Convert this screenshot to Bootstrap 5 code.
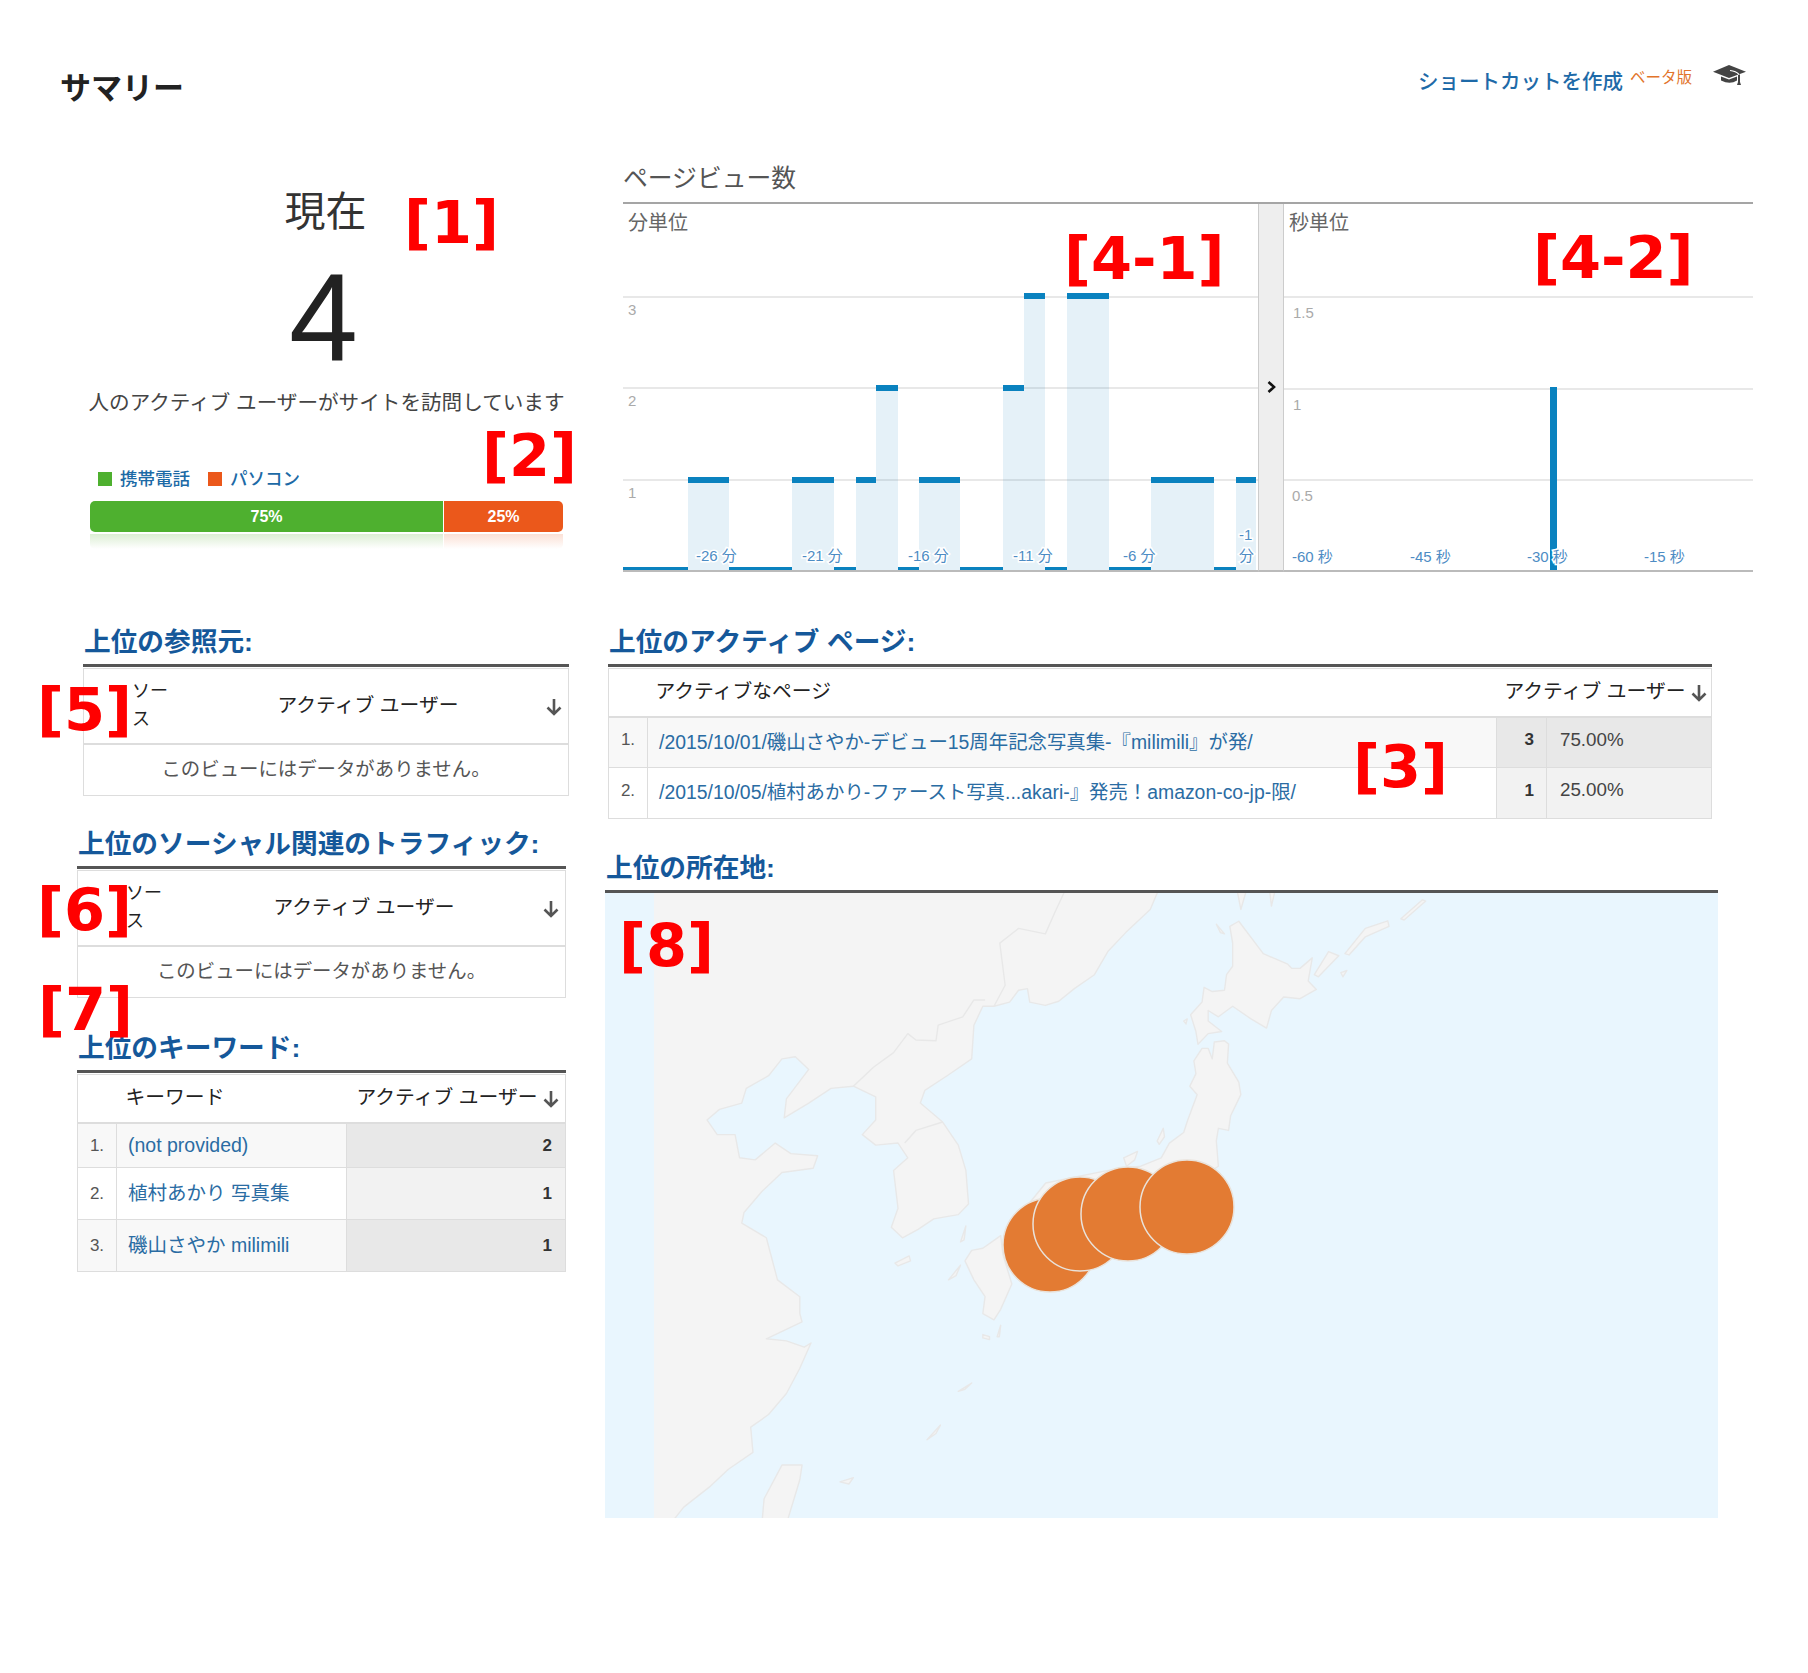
<!DOCTYPE html>
<html lang="ja">
<head>
    <meta charset="UTF-8">
    <meta name="viewport" content="width=device-width, initial-scale=1.0">
    <title>サマリー</title>
    <link href="https://cdn.jsdelivr.net/npm/bootstrap@5.3.0/dist/css/bootstrap.min.css" rel="stylesheet">
    <style>
        body {
            background: #fff;
            font-family: "Liberation Sans", "Noto Sans CJK JP", sans-serif;
            color: #333;
        }
        .page-wrap { width: 1808px; height: 1673px; position: relative; overflow: hidden; }

        /* header */
        .sum-head { height: 60px; margin: 56px 61px 44px 60px; }
        .sum-title { font-size: 31px; font-weight: 700; color: #222; margin: 5px 0 0; line-height: 60px; }
        .short-link { font-size: 20.5px; font-weight: 500; color: #1e6aa8; text-decoration: none; margin-bottom: 8px; }
        .beta-tag { font-size: 15.5px; color: #e2742b; margin: 0 20px 16px 7px; }
        .cap-icon { width: 33px; height: 21px; margin: 0 1px 22px 1px; fill: #444; }

        /* realtime */
        .top-row { height: 464px; }
        .now-box { width: 477px; margin-left: 88px; flex-shrink: 0; }
        .now-label { font-size: 41px; line-height: 48px; padding: 28px 2px 0 0; color: #333; }
        .now-count { font-size: 124px; line-height: 106px; padding: 28px 6px 0 0; color: #222; }
        .now-text { font-size: 20.6px; line-height: 30px; margin-top: 18px; color: #444; white-space: nowrap; }
        .device-legend { margin: 46px 0 0 10px; height: 30px; font-size: 17.5px; font-weight: 500; color: #1c6aa6; }
        .swatch { width: 14px; height: 14px; }
        .sw-green { background: #4eb02f; }
        .sw-orange { background: #eb581b; }
        .legend-gap { margin-right: 18px; }
        .device-bar { height: 31px; margin: 7px 0 0 2px; width: 473px; border-radius: 5px; background: #fff; --bs-progress-font-size: 16px; }
        .device-bar .progress-bar { font-weight: 700; color: #fff; }
        .bar-green { background: #4eb02f; width: 354px; border-right: 1px solid #fff; }
        .bar-orange { background: #eb581b; width: 119px; }
        .bar-shine { height: 15px; margin: 2px 0 0 2px; width: 473px; border-radius: 0 0 5px 5px; overflow: hidden; }
        .shine-g { width: 354px; background: linear-gradient(#dceed4, #fff); border-right: 1px solid #fff; }
        .shine-o { width: 119px; background: linear-gradient(#fbe0d5, #fff); }

        /* page view charts */
        .pv-box { width: 1130px; margin-left: 58px; flex-shrink: 0; }
        .pv-title { font-size: 24.8px; line-height: 34px; color: #555; padding: 2px 0 6px; border-bottom: 2px solid #a5a5a5; }
        .pv-charts { height: 368px; }
        .chart-svg { display: block; flex-shrink: 0; }
        .chart-min { width: 635px; height: 368px; }
        .chart-sec { width: 469px; height: 368px; }
        .chart-handle { width: 26px; flex-shrink: 0; background: #eee; border-left: 1px solid #ccc; border-right: 1px solid #ccc; border-bottom: 2px solid #bbb; }
        .chart-handle svg { width: 9px; height: 12px; }
        .c-head { font-size: 20px; fill: #666; }
        .c-y { font-size: 15px; fill: #aaa; }
        .c-x { font-size: 15px; fill: #4d8cc4; stroke: #fff; stroke-width: 3px; paint-order: stroke; }

        /* tables */
        .left-col { width: 604px; flex-shrink: 0; }
        .block-a { margin-left: 83px; width: 486px; }
        .block-b { margin: 30px 0 0 77px; width: 489px; }
        .block-c { margin: 32px 0 0 77px; width: 489px; }
        .block-d { margin-left: 4px; width: 1104px; }
        .block-e { margin: 31px 0 0 1px; width: 1113px; }
        .sec-head {
            font-size: 26.7px; line-height: 36px; font-weight: 700; color: #15589a;
            margin: 0; padding: 0 0 4px 1px; border-bottom: 3px solid #555; white-space: nowrap;
        }
        .ga-tbl { margin: 1px 0 0; table-layout: fixed; border: 1px solid #ddd; font-size: 19.8px; color: #333; }
        .ga-tbl th { font-weight: 400; color: #222; border: 0; border-bottom: 2px solid #ddd; padding: 0 0 2px 8px; vertical-align: middle; line-height: 28px; }
        .ga-tbl th.arrow-cell { padding-right: 6px; }
        .ga-tbl td { border: 1px solid #ddd; padding: 0; vertical-align: middle; }
        .ga-tbl a { color: #2a6ca3; text-decoration: none; }
        .ga-tbl td.c-alt { background: #f8f8f8; }
        .ga-tbl td.v-dark { background: #e8e8e8; }
        .ga-tbl td.v-light { background: #f2f2f2; }
        .down-arrow { width: 16px; height: 18px; fill: none; stroke: #555; stroke-width: 2.6; }
        .src-head { height: 75px; }
        .src-head th:first-child { width: 196px; padding-left: 48px; font-size: 18px; }
        .block-a .src-head th:first-child { width: 194px; }
        .src-name { display: block; width: 38px; }
        .src-head .aud { padding-left: 0; white-space: nowrap; }
        .src-empty td { height: 52px; text-align: center; color: #555; font-size: 19.4px; }
        .kw-head { height: 48px; }
        .kw-num { width: 39px; text-align: center; font-size: 17px; color: #555; }
        .kw-name { width: 230px; padding-left: 9px !important; }
        td.kw-name { padding-left: 11px !important; font-size: 19.5px; }
        .kw-r1 { height: 45px; }
        .kw-r2 { height: 52px; }
        .kw-val { text-align: right; padding-right: 13px !important; font-size: 17px; font-weight: 700; }
        .pg-head { height: 48px; }
        .col-num { width: 39px; }
        .col-val { width: 50px; }
        .col-pct { width: 165px; }
        .pg-num { text-align: center; font-size: 17px; color: #555; padding-bottom: 5px !important; }
        .pg-link { padding-left: 11px !important; font-size: 19.4px; white-space: nowrap; }
        .pg-row { height: 51px; }
        .pg-val { text-align: right; padding-right: 12px !important; font-weight: 700; font-size: 17px; padding-bottom: 5px !important; }
        .pg-pct { padding-left: 13px !important; font-size: 18.8px; color: #444; padding-bottom: 5px !important; }
        .pg-aud { white-space: nowrap; }

        /* map */
        .geo-map { display: block; width: 1113px; height: 625px; background: #e9f6fe; }
        .geo-land { fill: #f4f4f4; stroke: #e8e8e8; stroke-width: 1.4; stroke-linejoin: round; }
        .geo-line { fill: none; stroke: #e8e8e8; stroke-width: 1.4; stroke-linejoin: round; }
        .geo-land, .geo-line { vector-effect: non-scaling-stroke; }
        .geo-sea { fill: #e9f6fe; }
        .geo-dot { fill: #e37b33; stroke: #e9e2da; stroke-width: 1.5; }

        /* red callouts */
        .callout { position: absolute; font-family: "DejaVu Sans", sans-serif; font-weight: 700; font-size: 59px; line-height: 1; color: #f00; white-space: nowrap; }
        .co-1 { left: 404px; top: 193px; }
        .co-2 { left: 482px; top: 426px; }
        .co-41 { left: 1064px; top: 229px; }
        .co-42 { left: 1533px; top: 228px; }
        .co-3 { left: 1353px; top: 737px; }
        .co-5 { left: 37px; top: 680px; }
        .co-6 { left: 37px; top: 880px; }
        .co-7 { left: 38px; top: 980px; }
        .co-8 { left: 619px; top: 916px; }
    </style>
</head>
<body>
<div class="page-wrap">
    <div class="sum-head d-flex align-items-center">
        <h1 class="sum-title me-auto">サマリー</h1>
        <a class="short-link" href="#">ショートカットを作成</a>
        <span class="beta-tag">ベータ版</span>
        <svg class="cap-icon" viewBox="0 0 33 21">
            <path d="M0 6.700 16 0 33 6.700 16 13Z"/>
            <path d="M8 11.500 16 14.500 24 11.500V15.500Q17 20 8 15.500Z"/>
            <path d="M25 9.500H27V17L28 20H24L25 17Z"/>
            <path d="M17 5.500Q23 6 26 9.500" fill="none" stroke="#fff" stroke-width="1.200"/>
        </svg>
    </div>

    <div class="top-row d-flex">
        <div class="now-box">
            <div class="now-label text-center">現在</div>
            <div class="now-count text-center">4</div>
            <div class="now-text text-center">人のアクティブ ユーザーがサイトを訪問しています</div>
            <div class="device-legend d-flex align-items-center">
                <span class="swatch sw-green"></span><span class="ms-2 legend-gap">携帯電話</span>
                <span class="swatch sw-orange"></span><span class="ms-2">パソコン</span>
            </div>
            <div class="progress device-bar">
                <div class="progress-bar bar-green">75%</div>
                <div class="progress-bar bar-orange">25%</div>
            </div>
            <div class="bar-shine d-flex">
                <div class="shine-g"></div>
                <div class="shine-o"></div>
            </div>
        </div>

        <div class="pv-box">
            <div class="pv-title">ページビュー数</div>
            <div class="pv-charts d-flex">
                <svg class="chart-svg chart-min" id="chartMin" viewBox="0 0 635 368"></svg>
                <div class="chart-handle d-flex align-items-center justify-content-center">
                    <svg viewBox="0 0 9 12"><path d="M1.500 1 7 6 1.500 11" fill="none" stroke="#111" stroke-width="2.600"/></svg>
                </div>
                <svg class="chart-svg chart-sec" id="chartSec" viewBox="0 0 469 368"></svg>
            </div>
        </div>
    </div>

    <div class="d-flex">
        <div class="left-col">
            <div class="block-a">
                <h2 class="sec-head">上位の参照元:</h2>
                <table class="table ga-tbl">
                    <thead><tr class="src-head"><th><span class="src-name">ソース</span></th><th class="aud">アクティブ ユーザー</th><th class="text-end arrow-cell"><svg class="down-arrow" viewBox="0 0 16 18"><path d="M8 1V16M1.500 9.500 8 16 14.500 9.500"/></svg></th></tr></thead>
                    <tbody><tr class="src-empty"><td colspan="3">このビューにはデータがありません。</td></tr></tbody>
                </table>
            </div>
            <div class="block-b">
                <h2 class="sec-head">上位のソーシャル関連のトラフィック:</h2>
                <table class="table ga-tbl">
                    <thead><tr class="src-head"><th><span class="src-name">ソース</span></th><th class="aud">アクティブ ユーザー</th><th class="text-end arrow-cell"><svg class="down-arrow" viewBox="0 0 16 18"><path d="M8 1V16M1.500 9.500 8 16 14.500 9.500"/></svg></th></tr></thead>
                    <tbody><tr class="src-empty"><td colspan="3">このビューにはデータがありません。</td></tr></tbody>
                </table>
            </div>
            <div class="block-c">
                <h2 class="sec-head">上位のキーワード:</h2>
                <table class="table ga-tbl">
                    <thead>
                        <tr class="kw-head">
                            <th class="kw-num"></th>
                            <th class="kw-name">キーワード</th>
                            <th class="text-end arrow-cell text-nowrap">アクティブ ユーザー <svg class="down-arrow" viewBox="0 0 16 18"><path d="M8 1V16M1.500 9.500 8 16 14.500 9.500"/></svg></th>
                        </tr>
                    </thead>
                    <tbody>
                        <tr class="kw-r1"><td class="kw-num c-alt">1.</td><td class="kw-name c-alt"><a href="#">(not provided)</a></td><td class="kw-val v-dark">2</td></tr>
                        <tr class="kw-r2"><td class="kw-num">2.</td><td class="kw-name"><a href="#">植村あかり 写真集</a></td><td class="kw-val v-light">1</td></tr>
                        <tr class="kw-r2"><td class="kw-num c-alt">3.</td><td class="kw-name c-alt"><a href="#">磯山さやか milimili</a></td><td class="kw-val v-dark">1</td></tr>
                    </tbody>
                </table>
            </div>
        </div>

        <div>
            <div class="block-d">
                <h2 class="sec-head">上位のアクティブ ページ:</h2>
                <table class="table ga-tbl">
                    <colgroup><col class="col-num"><col><col class="col-val"><col class="col-pct"></colgroup>
                    <thead>
                        <tr class="pg-head">
                            <th></th>
                            <th>アクティブなページ</th>
                            <th class="pg-aud text-end arrow-cell" colspan="2">アクティブ ユーザー <svg class="down-arrow" viewBox="0 0 16 18"><path d="M8 1V16M1.500 9.500 8 16 14.500 9.500"/></svg></th>
                        </tr>
                    </thead>
                    <tbody>
                        <tr class="pg-row"><td class="pg-num c-alt">1.</td><td class="pg-link c-alt"><a href="#">/2015/10/01/磯山さやか-デビュー15周年記念写真集-『milimili』が発/</a></td><td class="pg-val v-dark">3</td><td class="pg-pct v-dark">75.00%</td></tr>
                        <tr class="pg-row"><td class="pg-num">2.</td><td class="pg-link"><a href="#">/2015/10/05/植村あかり-ファースト写真...akari-』発売！amazon-co-jp-限/</a></td><td class="pg-val v-light">1</td><td class="pg-pct v-light">25.00%</td></tr>
                    </tbody>
                </table>
            </div>
            <div class="block-e">
                <h2 class="sec-head">上位の所在地:</h2>
                <svg class="geo-map" viewBox="0 1 1113 625">
                    <!-- coordinates traced from the crop, scaled into map space -->
                    <g transform="translate(-15,-12) scale(.4464,.4209)">
                        <polygon class="geo-land" points="100,20 1275,20 1255,70 1200,125 1160,170 1130,225 1085,258 1050,288 1020,298 985,290 980,258 960,262 940,290 905,300 880,300 860,345 855,425 800,465 750,500 740,530 790,575 825,630 842,690 848,770 825,795 770,805 735,830 700,850 675,825 690,780 680,690 712,660 690,625 640,630 610,605 640,570 640,515 590,490 540,495 490,530 435,565 440,520 490,450 460,420 430,425 400,465 350,495 340,530 290,545 262,570 285,605 325,605 335,660 370,665 415,625 450,650 510,655 500,685 430,695 385,740 345,790 340,815 395,850 420,950 470,990 470,1030 475,1050 395,1090 440,1095 480,1110 495,1100 470,1160 440,1220 400,1270 360,1300 365,1360 310,1400 270,1440 210,1490 180,1530 100,1530"/>
                        <polyline class="geo-line" points="1062,30 1040,80 1020,128 960,115 918,150 930,250 905,300"/>
                        <polyline class="geo-line" points="885,285 860,285 835,325 780,345 775,382 730,380 712,365 680,410 635,445 590,490"/>
                        <polyline class="geo-line" points="705,625 730,595 790,575"/>
                        <polygon class="geo-land" points="855,880 880,875 920,845 925,890 945,960 920,1020 905,1045 880,1030 885,990 860,950 840,905"/>
                        <polygon class="geo-land" points="830,860 842,822 838,855"/>
                        <polygon class="geo-land" points="683,910 715,893 718,905 690,917"/>
                        <polygon class="geo-land" points="803,950 830,915 820,940"/>
                        <polygon class="geo-land" points="912,1085 920,1058 917,1085"/>
                        <polygon class="geo-land" points="880,1080 895,1085 895,1092 880,1088"/>
                        <polygon class="geo-land" points="755,1330 785,1295 775,1315"/>
                        <polygon class="geo-land" points="825,1215 855,1195 840,1210"/>
                        <polygon class="geo-land" points="385,1530 390,1470 430,1390 475,1390 470,1425 440,1530"/>
                        <polygon class="geo-land" points="560,1430 590,1420 580,1435"/>
                        <polygon class="geo-land" points="1330,335 1338,330 1335,342"/>
                    </g>
                    <rect class="geo-sea" x="0" y="0" width="49" height="626"/>
                    <g transform="translate(495,-12) scale(.4082,.4209)">
                        <polygon class="geo-land" points="290,680 285,620 290,590 315,595 320,560 345,510 340,480 312,435 315,390 305,382 280,385 275,425 265,400 250,400 230,430 235,460 220,490 238,510 215,570 205,600 170,625 150,660 100,680 20,690 -133,720 -200,800 100,800"/>
                        <polygon class="geo-land" points="318,110 340,98 400,175 460,200 470,210 490,210 520,185 510,240 530,260 490,282 450,278 420,310 408,352 370,330 325,300 290,325 265,310 265,335 298,360 265,365 240,390 235,360 222,320 250,290 255,255 275,265 305,262 310,225 325,205 325,150"/>
                        <polygon class="geo-land" points="600,175 650,115 705,97 708,110 650,135 610,178"/>
                        <polygon class="geo-land" points="525,225 560,170 585,180 535,230"/>
                        <polygon class="geo-land" points="737,92 790,47 798,50 745,95"/>
                        <polygon class="geo-land" points="335,20 345,70 360,20"/>
                        <polygon class="geo-land" points="415,20 420,62 430,20"/>
                        <polygon class="geo-land" points="285,105 305,128 295,125"/>
                        <polygon class="geo-land" points="140,620 155,590 158,610 145,628"/>
                        <polygon class="geo-land" points="58,660 92,645 85,665 65,680"/>
                        <polygon class="geo-land" points="590,220 605,215 595,230"/>
                    </g>
                    <circle class="geo-dot" cx="445" cy="353" r="47"/>
                    <circle class="geo-dot" cx="475" cy="332" r="47"/>
                    <circle class="geo-dot" cx="523" cy="322" r="47"/>
                    <circle class="geo-dot" cx="582" cy="315" r="47"/>
                </svg>
            </div>
        </div>
    </div>

    <span class="callout co-1">[1]</span>
    <span class="callout co-2">[2]</span>
    <span class="callout co-41">[4-1]</span>
    <span class="callout co-42">[4-2]</span>
    <span class="callout co-3">[3]</span>
    <span class="callout co-5">[5]</span>
    <span class="callout co-6">[6]</span>
    <span class="callout co-7">[7]</span>
    <span class="callout co-8">[8]</span>
</div>

<script src="https://cdn.jsdelivr.net/npm/bootstrap@5.3.0/dist/js/bootstrap.bundle.min.js"></script>
<script>
    // y position for a value on the minute chart
    const valueY = v => 368 - v * 92;

    // [start x, end x, value]
    const minuteData = [
        [0, 65, 0], [65, 106, 1], [106, 169, 0], [169, 211, 1], [211, 233, 0], [233, 253, 1],
        [253, 275, 2], [275, 296, 0], [296, 337, 1], [337, 380, 0], [380, 401, 2], [401, 422, 3],
        [422, 444, 0], [444, 486, 3], [486, 528, 0], [528, 591, 1], [591, 613, 0], [613, 633, 1]
    ];

    function gridLines(ys, width) {
        return ys.map(y => `<rect x="0" y="${y}" width="${width}" height="2" fill="#e8e8e8"/>`).join('');
    }

    function drawMinuteChart() {
        let html = gridLines([92, 183, 275], 635);
        minuteData.forEach(([x1, x2, v]) => {
            if (v > 0) {
                html += `<rect x="${x1}" y="${valueY(v)}" width="${x2 - x1}" height="${368 - valueY(v)}" fill="rgba(0,120,190,.1)"/>`;
                html += `<rect x="${x1}" y="${valueY(v) - 3}" width="${x2 - x1}" height="6" fill="#0a82bf"/>`;
            } else {
                html += `<rect x="${x1}" y="363" width="${x2 - x1}" height="5" fill="#0a82bf"/>`;
            }
        });
        html += '<rect x="0" y="366" width="635" height="2" fill="#bbb"/>';
        html += '<text class="c-head" x="5" y="26">分単位</text>';
        [[3, 111], [2, 202], [1, 294]].forEach(([t, y]) => {
            html += `<text class="c-y" x="5" y="${y}">${t}</text>`;
        });
        [['-26 分', 73], ['-21 分', 179], ['-16 分', 285], ['-11 分', 390], ['-6 分', 500]].forEach(([t, x]) => {
            html += `<text class="c-x" x="${x}" y="357">${t}</text>`;
        });
        html += '<text class="c-x" x="616" y="336">-1</text><text class="c-x" x="616" y="357">分</text>';
        document.getElementById('chartMin').innerHTML = html;
    }

    function drawSecondChart() {
        let html = gridLines([92, 184, 275], 469);
        html += '<rect x="266" y="183" width="7" height="185" fill="#0a82bf"/>';
        html += '<rect x="0" y="366" width="469" height="2" fill="#bbb"/>';
        html += '<text class="c-head" x="5" y="26">秒単位</text>';
        [['1.5', 9, 114], ['1', 9, 206], ['0.5', 8, 297]].forEach(([t, x, y]) => {
            html += `<text class="c-y" x="${x}" y="${y}">${t}</text>`;
        });
        [['-60 秒', 8], ['-45 秒', 126], ['-30 秒', 243], ['-15 秒', 360]].forEach(([t, x]) => {
            html += `<text class="c-x" x="${x}" y="358">${t}</text>`;
        });
        document.getElementById('chartSec').innerHTML = html;
    }

    drawMinuteChart();
    drawSecondChart();
</script>
</body>
</html>
